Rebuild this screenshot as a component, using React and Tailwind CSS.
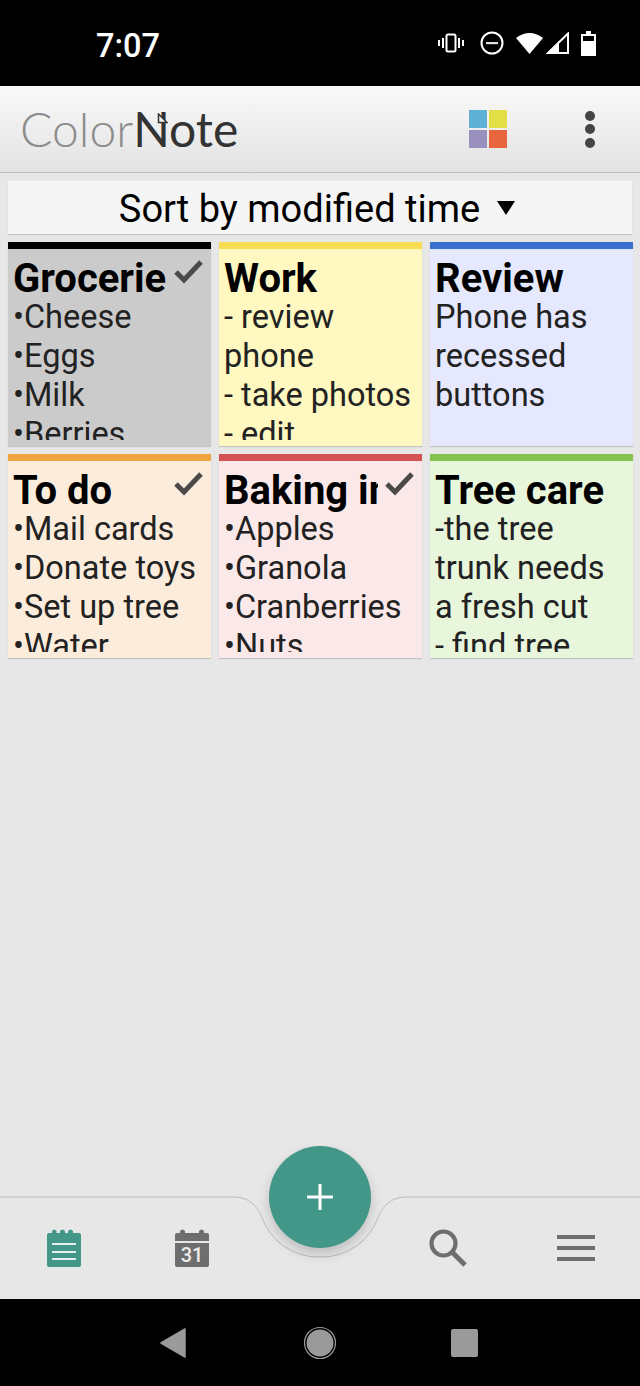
const notes = [
  { title: "Grocerie", lines: ["•Cheese", "•Eggs", "•Milk", "•Berries"], bar: "bg-[#000000]", bg: "bg-[#cbcbcb]", check: true },
  { title: "Work", lines: ["- review", "phone", "- take photos", "- edit"], bar: "bg-[#f8dd52]", bg: "bg-[#fff8c0]" },
  { title: "Review", lines: ["Phone has", "recessed", "buttons"], bar: "bg-[#3a70cf]", bg: "bg-[#e6e8fd]" },
  { title: "To do", lines: ["•Mail cards", "•Donate toys", "•Set up tree", "•Water"], bar: "bg-[#f2a53f]", bg: "bg-[#fcecdc]", check: true },
  { title: "Baking ingredients", lines: ["•Apples", "•Granola", "•Cranberries", "•Nuts"], bar: "bg-[#d55252]", bg: "bg-[#fbe8e8]", check: true },
  { title: "Tree care", lines: ["-the tree", "trunk needs", "a fresh cut", "- find tree"], bar: "bg-[#84c350]", bg: "bg-[#e8f6dc]" },
];

function Note({ n }) {
  return (
    <div className={`h-[204px] flex flex-col ${n.bg} shadow-[0_1px_1px_rgba(0,0,0,0.15)]`}>
      <div className={`h-[7px] shrink-0 ${n.bar}`} />
      <div className="flex flex-col pl-[5px] pt-[7px] h-[191px] overflow-hidden">
        <div className="flex shrink-0 h-[44px]">
          <div className={`${n.check ? "w-[154px]" : "w-[193px]"} h-[44px] pt-[1px] overflow-hidden whitespace-nowrap text-[40px] leading-[44px] font-bold text-black`}>
            {n.title}
          </div>
          {n.check && (
            <svg width="32" height="26" viewBox="0 0 32 26" className="ml-[6px] mt-[2px] shrink-0">
              <path d="M3 14 L11 22 L28 4" fill="none" stroke="#4a4a4a" strokeWidth="5" />
            </svg>
          )}
        </div>
        <div className="h-[142px] overflow-hidden text-[32.5px] leading-[39px] text-[#222222] -mt-[2px]">
          {n.lines.map((l) => (
            <div key={l} className="whitespace-nowrap">{l}</div>
          ))}
        </div>
      </div>
    </div>
  );
}

export default function App() {
  return (
    <div className="w-[640px] h-[1386px] flex flex-col bg-[#e7e7e7] font-['Roboto',sans-serif] overflow-hidden">
      <div className="h-[86px] bg-black flex items-center shrink-0 pl-[96px] pr-[44px] justify-between">
        <span className="text-white text-[32.5px] font-medium leading-none mt-[6px]">7:07</span>
        <div className="flex items-center">
          <svg width="26" height="24" viewBox="0 0 26 24" className="mr-[16px]">
            <rect x="8.5" y="3.5" width="9" height="17" rx="1.5" fill="none" stroke="#fff" strokeWidth="2" />
            <rect x="4" y="7" width="2" height="10" fill="#fff" />
            <rect x="20" y="7" width="2" height="10" fill="#fff" />
            <rect x="0" y="9" width="2" height="6" fill="#fff" />
            <rect x="24" y="9" width="2" height="6" fill="#fff" />
          </svg>
          <svg width="24" height="24" viewBox="0 0 24 24" className="mr-[12px]">
            <circle cx="12" cy="12" r="10.5" fill="none" stroke="#fff" strokeWidth="2" />
            <rect x="6" y="11" width="12" height="2.2" fill="#e0e0e0" />
          </svg>
          <svg width="27" height="22" viewBox="0 0 27 22" className="mr-[3px]">
            <path d="M0 6 Q13.5 -4 27 6 L13.5 22 Z" fill="#fff" />
          </svg>
          <svg width="23" height="22" viewBox="0 0 23 22" className="mr-[12px]">
            <path d="M22 1.5 V21 H2 Z" fill="none" stroke="#fff" strokeWidth="2" />
            <path d="M1 21.5 L13 9.5 V21.5 Z" fill="#fff" />
          </svg>
          <svg width="15" height="25" viewBox="0 0 15 25">
            <path fillRule="evenodd" d="M5 0 H10 V3 H15 V25 H0 V3 H5 Z M2 5 V10 H13 V5 Z" fill="#fff" />
          </svg>
        </div>
      </div>

      <div className="h-[87px] shrink-0 flex items-center bg-gradient-to-b from-[#f9f9f9] to-[#e3e3e3] border-b border-[#bdbdbd] pl-[20px] pr-[45px]">
        <div className="relative font-['Lato',sans-serif] text-[48px] leading-none whitespace-nowrap">
          <span className="text-[#8c8c8c] font-light">Color</span>
          <span className="text-[#333333] font-normal">Note</span>
          <svg width="11" height="11" viewBox="0 0 11 11" className="absolute left-[137px] top-[8px]">
            <path d="M1.5 1 L10 9.5 H1.5 Z" fill="#f4f4f4" stroke="#333" strokeWidth="1.5" />
          </svg>
        </div>
        <div className="ml-auto mr-[77px] -translate-x-[1px] grid grid-cols-2 gap-[2px] w-[38px] h-[38px]">
          <div className="bg-[#5fb2d3]" />
          <div className="bg-[#e2de45]" />
          <div className="bg-[#9a90bd]" />
          <div className="bg-[#e8663d]" />
        </div>
        <div className="flex flex-col gap-[3.5px]">
          <div className="w-[10px] h-[10px] rounded-full bg-[#444444]" />
          <div className="w-[10px] h-[10px] rounded-full bg-[#444444]" />
          <div className="w-[10px] h-[10px] rounded-full bg-[#444444]" />
        </div>
      </div>

      <div className="flex-1 px-[8px] pt-[8px] flex flex-col">
        <div className="h-[53px] bg-[#f5f5f5] shadow-[0_1px_1px_rgba(0,0,0,0.15)] flex items-center justify-center shrink-0 w-[624px] pr-[5px]">
          <span className="text-[38px] leading-none text-black mt-[2px]">Sort by modified time</span>
          <svg width="20" height="16" viewBox="0 0 20 16" className="ml-[16px] mt-[1px]">
            <path d="M1 1 H19 L10 15 Z" fill="#000" />
          </svg>
        </div>
        <div className="grid grid-cols-[203px_203px_203px] gap-[8px] mt-[8px]">
          {notes.map((n) => (
            <Note key={n.title} n={n} />
          ))}
        </div>
      </div>

      <div className="relative h-[102px] shrink-0 flex items-center">
        <svg width="640" height="112" viewBox="0 0 640 112" className="absolute left-0 -top-[50px]">
          <path d="M0 50 H234 C250 50 257 60 261 68 A60 60 0 0 0 320 110 A60 60 0 0 0 379 68 C383 60 390 50 406 50 H640" fill="none" stroke="#bcbcbc" strokeWidth="1" />
        </svg>
        <div className="absolute left-[269px] -top-[51px] w-[102px] h-[102px] rounded-full bg-[#429788] shadow-[0_6px_12px_rgba(0,0,0,0.18)] flex items-center justify-center">
          <svg width="28" height="28" viewBox="0 0 28 28">
            <path d="M14 1 V27 M1 14 H27" stroke="#fff" strokeWidth="3" />
          </svg>
        </div>
        <svg width="34" height="38" viewBox="0 0 34 38" className="ml-[47px]">
          <path d="M2 4 H5 V2 Q7 -1 9.5 2 V4 H13 V2 Q15.5 -1 18 2 V4 H21 V2 Q23.5 -1 26 2 V4 H32 Q34 4 34 6 V36 Q34 38 32 38 H2 Q0 38 0 36 V6 Q0 4 2 4 Z" fill="#429788" />
          <path d="M5 15 H29 M5 23 H29 M5 30 H29" stroke="#e4f0ee" strokeWidth="2" />
        </svg>
        <div className="relative ml-[94px] w-[34px] h-[38px] flex flex-col">
          <svg width="34" height="38" viewBox="0 0 34 38">
            <path d="M2 4 H5 V2 Q7.5 -1 10 2 V4 H24 V2 Q26.5 -1 29 2 V4 H32 Q34 4 34 6 V12 H0 V6 Q0 4 2 4 Z M0 14 H34 V36 Q34 38 32 38 H2 Q0 38 0 36 Z" fill="#6e6e6e" />
          </svg>
          <span className="absolute left-0 right-0 top-[14px] text-center text-[#ececec] text-[20px] font-medium leading-[24px]">31</span>
        </div>
        <svg width="38" height="38" viewBox="0 0 38 38" className="ml-[220px]">
          <circle cx="14.5" cy="14.5" r="12" fill="none" stroke="#6e6e6e" strokeWidth="4.2" />
          <path d="M23 23 L36 36" stroke="#6e6e6e" strokeWidth="5" />
        </svg>
        <div className="ml-[90px] flex flex-col gap-[6.5px]">
          <div className="w-[38px] h-[4.5px] bg-[#6e6e6e]" />
          <div className="w-[38px] h-[4.5px] bg-[#6e6e6e]" />
          <div className="w-[38px] h-[4.5px] bg-[#6e6e6e]" />
        </div>
      </div>

      <div className="h-[87px] bg-black shrink-0 flex items-center pl-[160px]">
        <svg width="26" height="30" viewBox="0 0 26 30">
          <path d="M25 1 V29 L1 15 Z" fill="#9a9a9a" stroke="#9a9a9a" strokeLinejoin="round" strokeWidth="1.5" />
        </svg>
        <svg width="34" height="34" viewBox="0 0 34 34" className="ml-[117px]">
          <circle cx="17" cy="17" r="15.5" fill="none" stroke="#9a9a9a" strokeWidth="1.2" />
          <circle cx="17" cy="17" r="13.5" fill="#9a9a9a" />
        </svg>
        <div className="ml-[114px] w-[27px] h-[28px] bg-[#9a9a9a] rounded-[2px]" />
      </div>
    </div>
  );
}
